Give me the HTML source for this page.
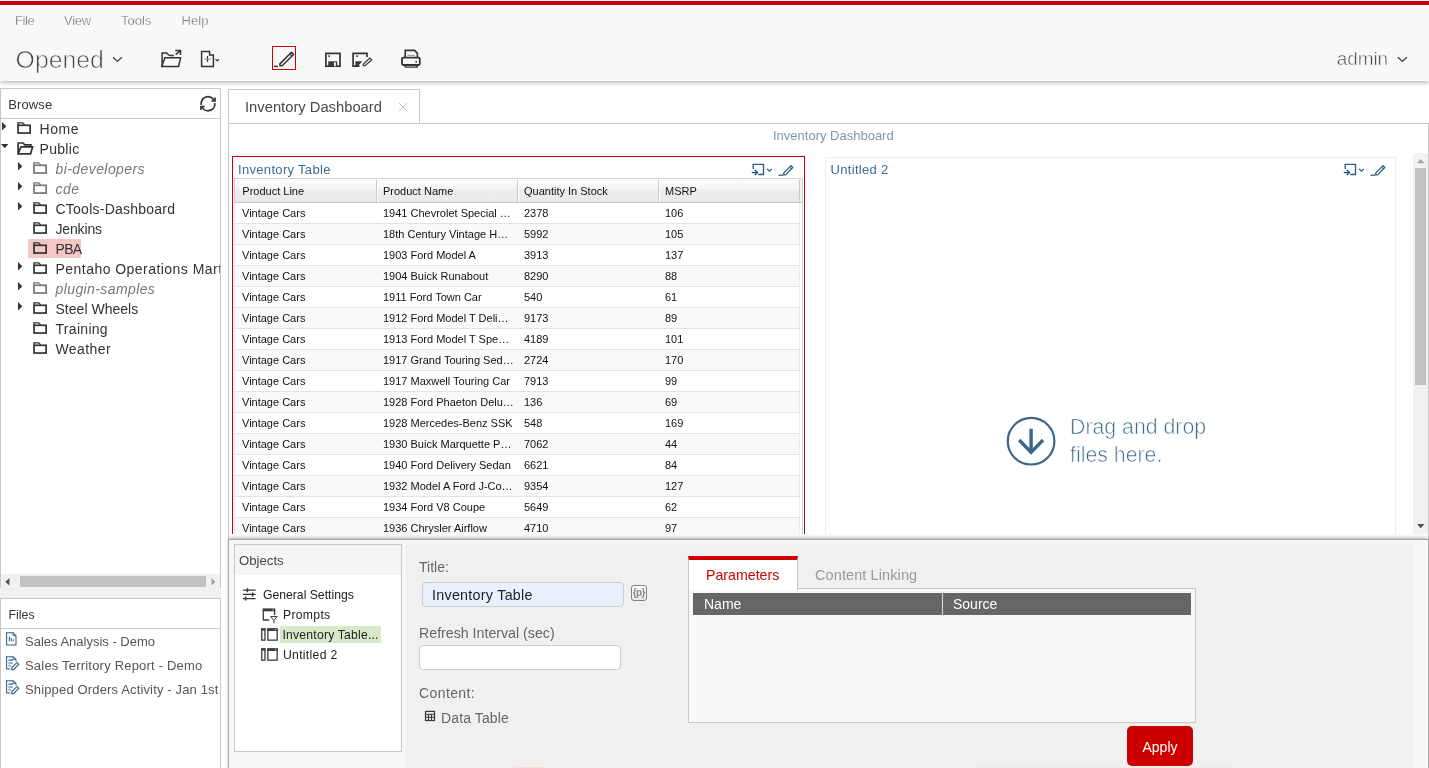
<!DOCTYPE html>
<html><head><meta charset="utf-8"><title>Pentaho User Console</title>
<style>
*{box-sizing:border-box;margin:0;padding:0}
html,body{width:1429px;height:768px;overflow:hidden;background:#fff;font-family:"Liberation Sans",sans-serif;color:#555}
.abs{position:absolute}
.t{position:absolute;white-space:nowrap;line-height:1}
svg{position:absolute;overflow:visible}
.ic{fill:none;stroke:#333;stroke-width:1.5}
#redbar{left:0;top:0;width:1429px;height:6px;background:#cc0000;border-top:1px solid #e6ffff;border-bottom:1px solid #fcffff}
#header{left:0;top:6px;width:1429px;height:75px;background:#f8f8f6;box-shadow:0 1px 5px rgba(0,0,0,.36)}
.menu{font-size:13px;color:#505050;top:14px;-webkit-text-stroke:.4px #f8f8f6}
#editbtn{left:272px;top:46px;width:24px;height:24px;border:1px solid #cc0000}
/* left */
#browse{left:0;top:88px;width:221px;height:500px;border:1px solid #c8c8c8;border-bottom:none;background:#fff;overflow:hidden}
#browse .hd,#filesp .hd{position:absolute;left:0;top:0;width:219px;height:30px;border-bottom:1px solid #c8c8c8}
#filesp{left:0;top:598px;width:221px;height:180px;border:1px solid #c8c8c8;background:#fff;overflow:hidden}
.row{position:absolute;left:0;height:20px;width:400px}
.row .lbl{position:absolute;top:1px;font-size:14px;line-height:18px;color:#333;white-space:nowrap}
.row.hid .lbl{font-style:italic;color:#777}
.row .sel{position:absolute;left:27px;top:0;width:53px;height:19px;background:#f4c7c7}
.frow{position:absolute;left:0;height:24px;width:400px}
  .frow .lbl{position:absolute;left:24px;top:2.8px;font-size:13px;line-height:18px;color:#555;white-space:nowrap}
#hscroll{left:1px;top:574px;width:219px;height:15px;background:#f1f1f1}
#hscroll .thumb{position:absolute;left:19px;top:2px;width:186px;height:11px;background:#c1c1c1}
#gap{left:0;top:589px;width:221px;height:9px;background:#f1f1f1}
/* content */
#tab{left:228px;top:89px;width:192px;height:35px;border:1px solid #c8c8c8;background:#fff}
#content{left:228px;top:123px;width:1201px;height:650px;border:1px solid #c8c8c8;background:#fff}
#dashtitle{left:773px;top:129px;font-size:13px;color:#7a98ad}
#p1{left:232px;top:156px;width:573px;height:400px;border:1px solid #cc0000;background:#fff;overflow:hidden}
#p1 .ttl,#p2 .ttl{position:absolute;font-size:13px;color:#3d6c90;white-space:nowrap;line-height:1;letter-spacing:.32px}
#p2{left:825px;top:157px;width:571px;height:400px;border:1px solid #e6eff3;background:#fff}
table.dt{position:absolute;left:1px;top:21px;border-collapse:separate;border-spacing:0;font-size:11px;color:#111;table-layout:fixed;width:566px}
table.dt th{height:25px;width:141px;text-align:left;font-weight:normal;padding:0 0 0 6px;border-top:1px solid #d0d0d0;border-bottom:1px solid #c6c6c6;background:linear-gradient(#c9c9c9,#c9c9c9) right 1px/1px 100% no-repeat,linear-gradient(#fff,#fff) left 1px/1px 100% no-repeat,linear-gradient(#fff,#fff) left top/100% 1px no-repeat,linear-gradient(#fafafa 0%,#f5f5f6 42%,#eeeef0 43%,#e9e9eb 100%)}
table.dt th:first-child{border-left:1px solid #d0d0d0;width:143px;padding-left:7.3px;background:linear-gradient(#c9c9c9,#c9c9c9) right 1px/1px 100% no-repeat,linear-gradient(#fff,#fff) left top/100% 1px no-repeat,linear-gradient(#fafafa 0%,#f5f5f6 42%,#eeeef0 43%,#e9e9eb 100%)}
table.dt td{height:21px;padding:0 0 0 6px;border-bottom:1px solid #e3e3e3;white-space:nowrap;overflow:hidden}
table.dt td:first-child{padding-left:8px;border-left:1px solid #ececec;padding-left:7px}
table.dt td:last-child{border-right:1px solid #ececec}
table.dt tr.alt td{background:#f9f9f9}
#clip{left:229px;top:124px;width:1199px;height:410px;overflow:hidden}
#vscroll{left:1413px;top:153px;width:15px;height:381px;background:#f1f1f1}
#vscroll .thumb{position:absolute;left:2px;top:15px;width:11px;height:217px;background:#c1c1c1}
#drop{font-size:22px;color:#3d6a8e;-webkit-text-stroke:.6px #fff;line-height:28px;left:1070px;top:413px;position:absolute;white-space:nowrap}
/* bottom */
#bottom{left:229px;top:539px;width:1199px;height:240px;background:#f7f7f7;border-top:1px solid #a8a8a8;box-shadow:0 -1px 4px rgba(0,0,0,.35)}
#inner{left:406px;top:544px;width:1007px;height:230px;background:#f0f0f0}
#objects{left:234px;top:544px;width:168px;height:208px;border:1px solid #c8c8c8;background:#fff}
#objects .hd{position:absolute;left:0;top:0;width:166px;height:30px;background:#f5f5f5}
.orow{position:absolute;font-size:12.2px;color:#222;white-space:nowrap;line-height:1}
#osel{left:280px;top:626px;width:101px;height:17px;background:#d6e9c9}
.flabel{font-size:14px;color:#666}
#tin{left:422px;top:582px;width:202px;height:25px;border:1px solid #cbcbcb;border-radius:4px;background:#e8f0fe}
#rin{left:419px;top:645px;width:202px;height:25px;border:1px solid #cbcbcb;border-radius:4px;background:#fff}
#pbtn{left:631px;top:585px;width:16px;height:16px;border:1px solid #808080;border-radius:3px;background:linear-gradient(#fdfdfd,#e9e9e9);font-size:10px;font-weight:bold;color:#8a8a8a;text-align:center;line-height:13px;letter-spacing:-.6px;text-indent:-.6px;overflow:hidden}
#ptab{left:688px;top:556px;width:110px;height:34px;background:#fff;border:1px solid #c8c8c8;border-top:4px solid #cc0000;border-bottom:none}
#ppanel{left:688px;top:588px;width:508px;height:135px;border:1px solid #c8c8c8;background:#f8f8f8}
#phead{left:693px;top:593px;width:498px;height:22px;background:#666}
#phead .sep{position:absolute;left:249px;top:0;width:1px;height:22px;background:#ddd}
#apply{left:1127px;top:726px;width:66px;height:40px;background:#cc0000;border-radius:5px;color:#fff;font-size:14px;text-align:center;line-height:42px}
#wrap{position:absolute;left:0;top:0;width:1429px;height:768px;will-change:transform}
</style></head><body><div id="wrap">
<div id="header" class="abs"></div>
<div id="redbar" class="abs"></div>
<div class="t menu" style="left:15px;letter-spacing:-.4px">File</div>
<div class="t menu" style="left:64px;letter-spacing:-.3px">View</div>
<div class="t menu" style="left:121px">Tools</div>
<div class="t menu" style="left:181.4px;letter-spacing:.15px">Help</div>
<div class="t" id="opened" style="left:15.6px;top:47.6px;font-size:24.8px;color:#444;-webkit-text-stroke:.7px #f8f8f6">Opened</div>
<svg style="left:110px;top:54px" width="14" height="10" viewBox="110 54 14 10"><polyline class="ic" points="113,57.2 117.4,61.4 121.8,57.2" style="stroke:#444;stroke-width:1.4"/></svg>
<!-- open folder -->
<svg style="left:160px;top:49px" width="22" height="19" viewBox="160 49 22 19"><g class="ic">
<path d="M162.1,66 V52.9 H166.2 C167.6,52.9 168.2,55.5 169.9,55.5 H174"/>
<path d="M161.8,66.4 L164.9,57.8 H180.6 L178.6,66.4 Z"/>
<path d="M175.6,54.6 L180.3,50.6 M175.2,50.5 H180.5 V54.9"/>
</g></svg>
<!-- new file -->
<svg style="left:200px;top:50px" width="21" height="18" viewBox="200 50 21 18"><g class="ic">
<path d="M201.6,51.5 H209.6 V55 H213.4 V66.5 H201.6 Z" />
<path d="M207.5,56 V62" style="stroke-width:1.2"/><path d="M204.3,59.1 H210.8" style="stroke-width:1;stroke:#888"/>
<polyline points="215.6,59.2 217.3,60.9 219,59.2" style="stroke-width:1.1"/>
</g></svg>
<!-- edit -->
<div id="editbtn" class="abs"></div>
<svg style="left:273px;top:50px" width="22" height="18" viewBox="273 50 22 18"><g class="ic">
<path d="M279.9,65.8 V63.9 L291.5,52.2 L293.6,54.5 L282.1,65.8 Z" style="stroke-linejoin:round"/>
<path d="M289.8,54 L291.9,56.2" style="stroke-width:1.1"/>
<path d="M273.9,66.4 H277.9"/>
</g></svg>
<!-- save -->
<svg style="left:324px;top:51px" width="18" height="17" viewBox="324 51 18 17"><g class="ic">
<rect x="325.9" y="53.4" width="14.1" height="12.8" style="stroke-width:1.7"/>
<rect x="328.2" y="61.3" width="9" height="5" style="fill:#3a3a3a;stroke:none"/>
<rect x="334" y="62.3" width="1.8" height="3.9" style="fill:#f8f8f6;stroke:none"/>
<rect x="328.3" y="55.3" width="1.6" height="1.6" style="fill:#333;stroke:none"/>
</g></svg>
<!-- save as -->
<svg style="left:351px;top:51px" width="23" height="17" viewBox="351 51 23 17"><g class="ic">
<path d="M367,57 V53.4 H353.1 V66.2 H359.5" style="stroke-width:1.7"/>
<path d="M355.4,61.3 H362.3 L357.8,66.2 H355.4 Z" style="fill:#3a3a3a;stroke:none"/>
<rect x="356.2" y="55.3" width="1.6" height="1.6" style="fill:#333;stroke:none"/>
<path d="M363.2,65.7 V64.3 L369.7,58 L371.7,59.9 L365,65.7 Z" style="stroke-width:1.2"/>
</g></svg>
<!-- print -->
<svg style="left:400px;top:48px" width="22" height="21" viewBox="400 48 22 21"><g class="ic">
<path d="M405.2,57.2 V50.4 H414.6 L417.4,53.4 V57.2" style="stroke-width:1.6"/>
<path d="M407.2,55.4 H414.8" style="stroke-width:.9;stroke:#888"/>
<rect x="402" y="57.6" width="17.8" height="7.4" rx="1.2" style="stroke-width:1.8"/>
<rect x="415.4" y="61" width="1.6" height="1.6" style="fill:#333;stroke:none"/>
<path d="M405.3,65.4 V67.1 H417.2 V65.4" style="stroke-width:1.4"/>
</g></svg>
<div class="t" id="admin" style="left:1336.8px;top:48.8px;font-size:19px;letter-spacing:-.1px;color:#444;-webkit-text-stroke:.55px #f8f8f6">admin</div>
<svg style="left:1395px;top:54px" width="14" height="10" viewBox="1395 54 14 10"><polyline class="ic" points="1397.9,57.2 1402.4,61.4 1406.9,57.2" style="stroke:#444;stroke-width:1.4"/></svg>
<div id="browse" class="abs">
<div class="hd"><div class="t" style="left:7.3px;top:9px;font-size:13px;color:#333;letter-spacing:.1px">Browse</div></div>
<svg style="left:198px;top:5px" width="20" height="20" viewBox="199 94 20 20"><g class="ic" style="stroke-width:1.8">
<path d="M201.3,104.9 A6.8,6.8 0 0 1 214.2,100.8"/><path d="M215.1,97.4 V101 H211.4" style="stroke-width:1.6"/>
<path d="M214.8,103.1 A6.8,6.8 0 0 1 201.8,106.6"/><path d="M200.9,109.9 V106.5 H204.6" style="stroke-width:1.6"/>
</g></svg>
<div class="row" style="top:30px"><svg style="left:1px;top:2.8px" width="5" height="9" viewBox="0 0 5 9"><path d="M0,0 L4.3,4.2 L0,8.4 Z" fill="#333"/></svg><svg style="left:16px;top:3px" width="15" height="13" viewBox="0 0 15 13"><g style="fill:none;stroke:#333"><rect x="1.05" y="3.3" width="12.1" height="7.75" style="stroke-width:1.7"/><path d="M0.9,3.3 V0.8 H5.6 L7.6,2.8" style="stroke-width:1.35"/></g></svg><span class="lbl" style="left:38.5px;letter-spacing:0.55px">Home</span></div>
<div class="row" style="top:50px"><svg style="left:0px;top:5px" width="8" height="5" viewBox="0 0 8 5"><path d="M0,0 H7.4 L3.7,4.2 Z" fill="#333"/></svg><svg style="left:16px;top:3px" width="17" height="13" viewBox="0 0 17 13"><g style="fill:none;stroke:#333;stroke-width:1.7"><path d="M1.1,11.6 V1 H6 L7.8,2.9 H13.9 V4.6"/><path d="M1.2,11.8 L3.9,4.9 H15.6 L13.6,11.8 Z"/></g></svg><span class="lbl" style="left:38.5px;letter-spacing:0.3px">Public</span></div>
<div class="row hid" style="top:70px"><svg style="left:17px;top:2.8px" width="5" height="9" viewBox="0 0 5 9"><path d="M0,0 L4.3,4.2 L0,8.4 Z" fill="#333"/></svg><svg style="left:32px;top:3px" width="15" height="13" viewBox="0 0 15 13"><g style="fill:none;stroke:#777"><rect x="1.05" y="3.3" width="12.1" height="7.75" style="stroke-width:1.7"/><path d="M0.9,3.3 V0.8 H5.6 L7.6,2.8" style="stroke-width:1.35"/></g></svg><span class="lbl" style="left:54.5px;letter-spacing:0.42px">bi-developers</span></div>
<div class="row hid" style="top:90px"><svg style="left:17px;top:2.8px" width="5" height="9" viewBox="0 0 5 9"><path d="M0,0 L4.3,4.2 L0,8.4 Z" fill="#333"/></svg><svg style="left:32px;top:3px" width="15" height="13" viewBox="0 0 15 13"><g style="fill:none;stroke:#777"><rect x="1.05" y="3.3" width="12.1" height="7.75" style="stroke-width:1.7"/><path d="M0.9,3.3 V0.8 H5.6 L7.6,2.8" style="stroke-width:1.35"/></g></svg><span class="lbl" style="left:54.5px;letter-spacing:0.5px">cde</span></div>
<div class="row" style="top:110px"><svg style="left:17px;top:2.8px" width="5" height="9" viewBox="0 0 5 9"><path d="M0,0 L4.3,4.2 L0,8.4 Z" fill="#333"/></svg><svg style="left:32px;top:3px" width="15" height="13" viewBox="0 0 15 13"><g style="fill:none;stroke:#333"><rect x="1.05" y="3.3" width="12.1" height="7.75" style="stroke-width:1.7"/><path d="M0.9,3.3 V0.8 H5.6 L7.6,2.8" style="stroke-width:1.35"/></g></svg><span class="lbl" style="left:54.5px;letter-spacing:0.24px">CTools-Dashboard</span></div>
<div class="row" style="top:130px"><svg style="left:32px;top:3px" width="15" height="13" viewBox="0 0 15 13"><g style="fill:none;stroke:#333"><rect x="1.05" y="3.3" width="12.1" height="7.75" style="stroke-width:1.7"/><path d="M0.9,3.3 V0.8 H5.6 L7.6,2.8" style="stroke-width:1.35"/></g></svg><span class="lbl" style="left:54.5px;letter-spacing:-0.16px">Jenkins</span></div>
<div class="row" style="top:150px"><div class="sel"></div><svg style="left:32px;top:3px" width="15" height="13" viewBox="0 0 15 13"><g style="fill:none;stroke:#333"><rect x="1.05" y="3.3" width="12.1" height="7.75" style="stroke-width:1.7"/><path d="M0.9,3.3 V0.8 H5.6 L7.6,2.8" style="stroke-width:1.35"/></g></svg><span class="lbl" style="left:54.5px;letter-spacing:-0.7px">PBA</span></div>
<div class="row" style="top:170px"><svg style="left:17px;top:2.8px" width="5" height="9" viewBox="0 0 5 9"><path d="M0,0 L4.3,4.2 L0,8.4 Z" fill="#333"/></svg><svg style="left:32px;top:3px" width="15" height="13" viewBox="0 0 15 13"><g style="fill:none;stroke:#333"><rect x="1.05" y="3.3" width="12.1" height="7.75" style="stroke-width:1.7"/><path d="M0.9,3.3 V0.8 H5.6 L7.6,2.8" style="stroke-width:1.35"/></g></svg><span class="lbl" style="left:54.5px;letter-spacing:0.46px">Pentaho Operations Mart</span></div>
<div class="row hid" style="top:190px"><svg style="left:17px;top:2.8px" width="5" height="9" viewBox="0 0 5 9"><path d="M0,0 L4.3,4.2 L0,8.4 Z" fill="#333"/></svg><svg style="left:32px;top:3px" width="15" height="13" viewBox="0 0 15 13"><g style="fill:none;stroke:#777"><rect x="1.05" y="3.3" width="12.1" height="7.75" style="stroke-width:1.7"/><path d="M0.9,3.3 V0.8 H5.6 L7.6,2.8" style="stroke-width:1.35"/></g></svg><span class="lbl" style="left:54.5px;letter-spacing:0.4px">plugin-samples</span></div>
<div class="row" style="top:210px"><svg style="left:17px;top:2.8px" width="5" height="9" viewBox="0 0 5 9"><path d="M0,0 L4.3,4.2 L0,8.4 Z" fill="#333"/></svg><svg style="left:32px;top:3px" width="15" height="13" viewBox="0 0 15 13"><g style="fill:none;stroke:#333"><rect x="1.05" y="3.3" width="12.1" height="7.75" style="stroke-width:1.7"/><path d="M0.9,3.3 V0.8 H5.6 L7.6,2.8" style="stroke-width:1.35"/></g></svg><span class="lbl" style="left:54.5px;letter-spacing:0.02px">Steel Wheels</span></div>
<div class="row" style="top:230px"><svg style="left:32px;top:3px" width="15" height="13" viewBox="0 0 15 13"><g style="fill:none;stroke:#333"><rect x="1.05" y="3.3" width="12.1" height="7.75" style="stroke-width:1.7"/><path d="M0.9,3.3 V0.8 H5.6 L7.6,2.8" style="stroke-width:1.35"/></g></svg><span class="lbl" style="left:54.5px;letter-spacing:0.3px">Training</span></div>
<div class="row" style="top:250px"><svg style="left:32px;top:3px" width="15" height="13" viewBox="0 0 15 13"><g style="fill:none;stroke:#333"><rect x="1.05" y="3.3" width="12.1" height="7.75" style="stroke-width:1.7"/><path d="M0.9,3.3 V0.8 H5.6 L7.6,2.8" style="stroke-width:1.35"/></g></svg><span class="lbl" style="left:54.5px;letter-spacing:0.4px">Weather</span></div>
</div>
<div id="hscroll" class="abs"><div class="thumb"></div><svg style="left:4px;top:4px" width="5" height="8" viewBox="0 0 5 8"><path d="M4.4,0 V7.6 L0.3,3.8 Z" fill="#505050"/></svg><svg style="left:210px;top:4px" width="5" height="8" viewBox="0 0 5 8"><path d="M0.4,0 V7.6 L4.5,3.8 Z" fill="#a3a3a3"/></svg></div>
<div id="gap" class="abs"></div>
<div id="filesp" class="abs"><div class="hd"><div class="t" style="left:7.5px;top:9.5px;font-size:12.4px;color:#333">Files</div></div>
<div class="frow" style="top:31px"><svg style="left:5px;top:1.5px" width="12" height="15" viewBox="0 0 12 15"><g style="fill:none;stroke:#2d5f85;stroke-width:1.05"><path d="M0.6,0.7 H7 L10,3.6 V13 H0.6 Z"/><path d="M7,0.7 V3.6 H10" style="stroke-width:.9"/><path d="M3.4,4.4 V9.2 M5.3,6.2 V9.2 M7.2,7.2 V9.2"/></g></svg><span class="lbl" style="letter-spacing:0px">Sales Analysis - Demo</span></div>
<div class="frow" style="top:55px"><svg style="left:5px;top:1.5px" width="15" height="16" viewBox="0 0 15 16"><g style="fill:none;stroke:#2d5f85;stroke-width:1.05"><path d="M10,5.6 V3.4 L7.2,0.7 H0.6 V13 H4.4"/><path d="M7.2,0.7 V3.4 H10" style="stroke-width:.9"/><path d="M2.5,4.1 H7 M2.5,7 H6.8 M2.5,10 H4.8"/><path d="M5.8,13.6 V11.8 L11,6.4 L12.8,8.2 L7.6,13.6 Z" style="stroke-width:1.05"/></g></svg><span class="lbl" style="letter-spacing:0.2px">Sales Territory Report - Demo</span></div>
<div class="frow" style="top:79px"><svg style="left:5px;top:1.5px" width="15" height="16" viewBox="0 0 15 16"><g style="fill:none;stroke:#2d5f85;stroke-width:1.05"><path d="M10,5.6 V3.4 L7.2,0.7 H0.6 V13 H4.4"/><path d="M7.2,0.7 V3.4 H10" style="stroke-width:.9"/><path d="M2.5,4.1 H7 M2.5,7 H6.8 M2.5,10 H4.8"/><path d="M5.8,13.6 V11.8 L11,6.4 L12.8,8.2 L7.6,13.6 Z" style="stroke-width:1.05"/></g></svg><span class="lbl" style="letter-spacing:0.15px">Shipped Orders Activity - Jan 1st</span></div>
</div>
<div id="tab" class="abs"><div class="t" style="left:16px;top:9.5px;font-size:14.75px;color:#4a4a4a">Inventory Dashboard</div>
<svg style="left:169px;top:12px" width="10" height="10" viewBox="0 0 10 10"><path d="M1,1 L9,9 M9,1 L1,9" style="fill:none;stroke:#c4c4c4;stroke-width:1"/></svg></div>
<div id="content" class="abs"></div>
<div id="clip" class="abs">
</div>
<div class="t" id="dashtitle">Inventory Dashboard</div>
<div id="clipwrap" class="abs" style="left:229px;top:124px;width:1184px;height:410px;overflow:hidden">
<div id="p1" class="abs" style="left:3px;top:32px">
<div class="ttl" style="left:5px;top:6px">Inventory Table</div>
<svg style="left:518px;top:6px" width="22" height="14" viewBox="751 163 22 14"><g style="fill:none;stroke:#2d5f85;stroke-width:1.4">
<path d="M753.2,169 V164.4 H763.5 V174.5 H758.2"/><path d="M751.8,172.5 H757.4 M754.7,169.8 L757.6,172.5 L754.7,175.3"/>
<polyline points="767.1,169 769.4,171.2 771.8,169" style="stroke-width:1.2"/></g></svg>
<svg style="left:545px;top:6px" width="18" height="14" viewBox="778 163 18 14"><g style="fill:none;stroke:#2d5f85;stroke-width:1.3">
<path d="M783.7,174.9 V173.1 L791,165.6 L792.8,167.5 L785.4,174.9 Z" style="stroke-linejoin:round"/><path d="M789.6,167.1 L791.4,169" style="stroke-width:1"/><path d="M778.4,175.2 H783.2"/></g></svg>
<table class="dt"><thead><tr><th>Product Line</th><th>Product Name</th><th>Quantity In Stock</th><th>MSRP</th></tr></thead><tbody>
<tr><td>Vintage Cars</td><td>1941 Chevrolet Special …</td><td>2378</td><td>106</td></tr>
<tr class="alt"><td>Vintage Cars</td><td>18th Century Vintage H…</td><td>5992</td><td>105</td></tr>
<tr><td>Vintage Cars</td><td>1903 Ford Model A</td><td>3913</td><td>137</td></tr>
<tr class="alt"><td>Vintage Cars</td><td>1904 Buick Runabout</td><td>8290</td><td>88</td></tr>
<tr><td>Vintage Cars</td><td>1911 Ford Town Car</td><td>540</td><td>61</td></tr>
<tr class="alt"><td>Vintage Cars</td><td>1912 Ford Model T Deli…</td><td>9173</td><td>89</td></tr>
<tr><td>Vintage Cars</td><td>1913 Ford Model T Spe…</td><td>4189</td><td>101</td></tr>
<tr class="alt"><td>Vintage Cars</td><td>1917 Grand Touring Sed…</td><td>2724</td><td>170</td></tr>
<tr><td>Vintage Cars</td><td>1917 Maxwell Touring Car</td><td>7913</td><td>99</td></tr>
<tr class="alt"><td>Vintage Cars</td><td>1928 Ford Phaeton Delu…</td><td>136</td><td>69</td></tr>
<tr><td>Vintage Cars</td><td>1928 Mercedes-Benz SSK</td><td>548</td><td>169</td></tr>
<tr class="alt"><td>Vintage Cars</td><td>1930 Buick Marquette P…</td><td>7062</td><td>44</td></tr>
<tr><td>Vintage Cars</td><td>1940 Ford Delivery Sedan</td><td>6621</td><td>84</td></tr>
<tr class="alt"><td>Vintage Cars</td><td>1932 Model A Ford J-Co…</td><td>9354</td><td>127</td></tr>
<tr><td>Vintage Cars</td><td>1934 Ford V8 Coupe</td><td>5649</td><td>62</td></tr>
<tr class="alt"><td>Vintage Cars</td><td>1936 Chrysler Airflow</td><td>4710</td><td>97</td></tr>

</tbody></table>
<div class="abs" style="left:567px;top:21px;width:3px;height:25px;background:#f3f3f3;border-top:1px solid #d0d0d0;border-right:1px solid #cfcfcf;border-bottom:1px solid #c4c4c4"></div>
<div class="abs" style="left:569px;top:46px;width:1px;height:400px;background:#cfd3d5"></div>
</div>
<div class="abs" style="left:575px;top:78px;width:1px;height:340px;background:#7d2424"></div>
<div id="p2" class="abs" style="left:596px;top:33px">
<div class="ttl" style="left:4.5px;top:5px">Untitled 2</div>
<svg style="left:517px;top:5px" width="22" height="14" viewBox="751 163 22 14"><g style="fill:none;stroke:#2d5f85;stroke-width:1.4">
<path d="M753.2,169 V164.4 H763.5 V174.5 H758.2"/><path d="M751.8,172.5 H757.4 M754.7,169.8 L757.6,172.5 L754.7,175.3"/>
<polyline points="767.1,169 769.4,171.2 771.8,169" style="stroke-width:1.2"/></g></svg>
<svg style="left:544px;top:5px" width="18" height="14" viewBox="778 163 18 14"><g style="fill:none;stroke:#2d5f85;stroke-width:1.3">
<path d="M783.7,174.9 V173.1 L791,165.6 L792.8,167.5 L785.4,174.9 Z" style="stroke-linejoin:round"/><path d="M789.6,167.1 L791.4,169" style="stroke-width:1"/><path d="M778.4,175.2 H783.2"/></g></svg>
</div>
</div>
<svg style="left:1005px;top:415px" width="52" height="52" viewBox="1005 415 52 52"><g style="fill:none;stroke:#3a678a">
<circle cx="1031.1" cy="441.2" r="23.3" style="stroke-width:2.2"/>
<path d="M1031.1,428.8 V452.6 M1019.2,440 L1031.1,452.4 L1043,440" style="stroke-width:3.4"/></g></svg>
<div id="drop" style="font-size:21.3px;top:412.5px">Drag and drop<br>files here.</div>
<div id="vscroll" class="abs"><div class="thumb"></div>
<svg style="left:4px;top:6px" width="8" height="5" viewBox="0 0 8 5"><path d="M0,4.2 H7.4 L3.7,0 Z" fill="#a3a3a3"/></svg>
<svg style="left:4px;top:371px" width="8" height="5" viewBox="0 0 8 5"><path d="M0,0 H7.4 L3.7,4.2 Z" fill="#505050"/></svg>
</div>
<div id="bottom" class="abs"></div>
<div id="inner" class="abs"></div>
<div id="objects" class="abs"><div class="hd"></div></div>
<div class="t" style="left:239px;top:553.5px;font-size:13.2px;color:#444">Objects</div>
<div id="osel" class="abs"></div>
<!-- general settings icon -->
<svg style="left:242px;top:587px" width="15" height="15" viewBox="242 587 15 15"><g style="fill:none;stroke:#333;stroke-width:1.3">
<path d="M242.9,590.2 H255.6 M242.9,594.4 H255.6 M242.9,598.6 H255.6"/><path d="M247.4,588.2 V592.2 M252.6,592.4 V596.4 M245.6,596.6 V600.6" style="stroke-width:1.5"/></g></svg>
<div class="orow" style="left:263px;top:588.5px">General Settings</div>
<!-- prompts icon -->
<svg style="left:261px;top:607px" width="18" height="17" viewBox="261 607 18 17"><g style="fill:none;stroke:#3a3a3a;stroke-width:1.3">
<path d="M269.3,620 H263.3 V610 M274.6,610 V615.3"/><rect x="262.65" y="608.4" width="12.6" height="2.9" style="fill:#3a3a3a;stroke:none"/><rect x="272.5" y="609.3" width="1" height="1" style="fill:#fff;stroke:none"/>
<path d="M270.6,616.6 H277.2 L273.9,620.4 Z M273.9,620.4 V623.4" style="stroke-width:1;fill:#fff"/></g></svg>
<div class="orow" style="left:283px;top:608.5px;letter-spacing:.3px">Prompts</div>
<!-- panel icons -->
<svg style="left:260px;top:627px" width="19" height="15" viewBox="260 627 19 15"><g style="fill:none;stroke:#3a3a3a;stroke-width:1.3">
<rect x="261.75" y="629" width="3.2" height="11.15"/><rect x="267.85" y="629" width="9.3" height="11.15"/><rect x="267.2" y="628.35" width="10.6" height="2.6" style="fill:#3a3a3a;stroke:none"/><rect x="261.1" y="628.35" width="4.5" height="2.2" style="fill:#3a3a3a;stroke:none"/><rect x="275.3" y="629.1" width="1" height="1" style="fill:#fff;stroke:none"/></g></svg>
<div class="orow" style="left:282.5px;top:628.5px;letter-spacing:.2px">Inventory Table...</div>
<svg style="left:260px;top:647px" width="19" height="15" viewBox="260 627 19 15"><g style="fill:none;stroke:#3a3a3a;stroke-width:1.3">
<rect x="261.75" y="629" width="3.2" height="11.15"/><rect x="267.85" y="629" width="9.3" height="11.15"/><rect x="267.2" y="628.35" width="10.6" height="2.6" style="fill:#3a3a3a;stroke:none"/><rect x="261.1" y="628.35" width="4.5" height="2.2" style="fill:#3a3a3a;stroke:none"/><rect x="275.3" y="629.1" width="1" height="1" style="fill:#fff;stroke:none"/></g></svg>
<div class="orow" style="left:283px;top:648.5px;letter-spacing:.3px">Untitled 2</div>
<!-- form -->
<div class="t flabel" style="left:419px;top:560px">Title:</div>
<div id="tin" class="abs"><div class="t" style="left:9px;top:5px;font-size:14.3px;color:#222;letter-spacing:.27px">Inventory Table</div></div>
<div id="pbtn" class="abs">{p}</div>
<div class="t flabel" style="left:419px;top:626px;font-size:14.2px">Refresh Interval (sec)</div>
<div id="rin" class="abs"></div>
<div class="t flabel" style="left:419px;top:686px;letter-spacing:.4px">Content:</div>
<svg style="left:424px;top:710px" width="12" height="12" viewBox="0 0 12 12"><g style="fill:none;stroke:#3a3a3a;stroke-width:1.1"><rect x="1.5" y="1.4" width="9" height="9.1" style="stroke-width:1.2"/><path d="M1.5,4.2 H10.5 M1.5,7.3 H10.5 M4.5,4.2 V10.5 M7.5,4.2 V10.5"/></g></svg>
<div class="t flabel" style="left:441px;top:711px;letter-spacing:.12px">Data Table</div>
<!-- parameters -->
<div id="ppanel" class="abs"></div>
<div id="ptab" class="abs"></div>
<div class="t" style="left:706px;top:568px;font-size:14.2px;color:#cc0000">Parameters</div>
<div class="t" style="left:815px;top:568px;font-size:14.5px;color:#999;letter-spacing:.1px">Content Linking</div>
<div id="phead" class="abs"><div class="sep"></div>
<div class="t" style="left:11px;top:4px;font-size:14px;color:#fff">Name</div>
<div class="t" style="left:260px;top:4px;font-size:14px;color:#fff">Source</div></div>
<div id="apply" class="abs">Apply</div>
<div class="abs" style="left:515px;top:767px;width:30px;height:1px;background:#fbded6"></div><div class="abs" style="left:973px;top:767px;width:259px;height:1px;background:#f6e6e6"></div>
</div></body></html>
